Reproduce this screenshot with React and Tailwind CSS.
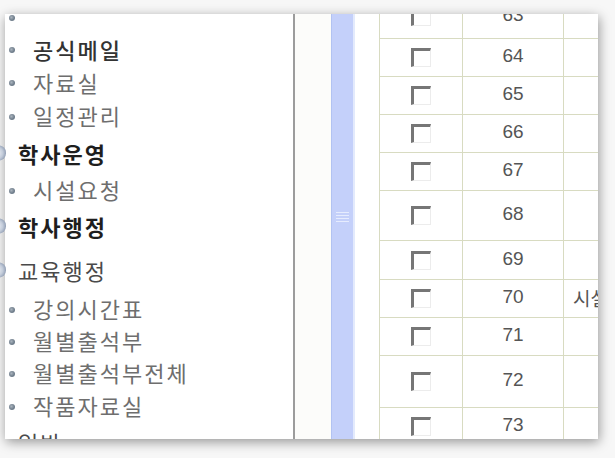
const MENU = [
  { type: 'dot', label: '', h: 32 },
  { type: 'sub', label: '공식메일', h: 33, strong: true },
  { type: 'sub', label: '자료실', h: 33 },
  { type: 'sub', label: '일정관리', h: 34 },
  { type: 'cat', label: '학사운영', h: 42, bold: true },
  { type: 'sub', label: '시설요청', h: 30 },
  { type: 'cat', label: '학사행정', h: 44, bold: true },
  { type: 'cat', label: '교육행정', h: 44 },
  { type: 'sub', label: '강의시간표', h: 32 },
  { type: 'sub', label: '월별출석부', h: 32 },
  { type: 'sub', label: '월별출석부전체', h: 32 },
  { type: 'sub', label: '작품자료실', h: 34 },
  { type: 'cat', label: '일반', h: 40, noIcon: true },
]

const ROWS = [
  { no: 63, h: 44 },
  { no: 64, h: 38 },
  { no: 65, h: 38 },
  { no: 66, h: 38 },
  { no: 67, h: 38 },
  { no: 68, h: 50 },
  { no: 69, h: 39 },
  { no: 70, h: 38, title: '시설' },
  { no: 71, h: 38 },
  { no: 72, h: 52 },
  { no: 73, h: 38 },
]

function Bullet() {
  return (
    <span className="ml-[4px] mt-[3px] h-[6px] w-[6px] shrink-0 rounded-full bg-[radial-gradient(circle_at_40%_40%,#aab4be_0%,#6d7b89_60%,#8e9aa6_100%)]" />
  )
}

function MenuItem({ item }) {
  if (item.type === 'dot') {
    return (
      <div className="flex items-end pb-[11px]" style={{ height: item.h }}>
        <Bullet />
      </div>
    )
  }
  if (item.type === 'cat') {
    return (
      <div className="relative flex items-center" style={{ height: item.h }}>
        {!item.noIcon && (
          <span className="absolute left-[-13px] top-1/2 h-[15px] w-[14px] -translate-y-1/2 rounded-full bg-[radial-gradient(circle_at_35%_50%,#f2f4f8_0%,#c3ccda_50%,#6a7a96_100%)]" />
        )}
        <span
          className={`pl-[13px] text-[22px] leading-none tracking-[2px] ${
            item.bold ? 'font-bold text-[#1e1e1e]' : 'text-[#4a4a4a]'
          }`}
        >
          {item.label}
        </span>
      </div>
    )
  }
  return (
    <div className="flex items-center" style={{ height: item.h }}>
      <Bullet />
      <span
        className={`ml-[18px] text-[22px] leading-none tracking-[2px] ${
          item.strong ? 'font-medium text-[#333]' : 'text-[#6e6e6e]'
        }`}
      >
        {item.label}
      </span>
    </div>
  )
}

function CheckBox() {
  return (
    <span className="block h-[19px] w-[20px] border-t-[3px] border-l-[3px] border-r border-b border-t-[#767676] border-l-[#767676] border-r-[#ececec] border-b-[#ececec] bg-white" />
  )
}

export default function App() {
  return (
    <div className="h-[458px] w-[615px] overflow-hidden bg-[#f7f7f7] pt-[14px] pl-[5px] font-['Noto_Sans_CJK_KR',sans-serif]">
      <div className="flex h-[425px] w-[593px] bg-white shadow-[1px_3px_11px_rgba(0,0,0,0.4)]">
        {/* left menu tree */}
        <div className="w-[290px] shrink-0 overflow-y-clip overflow-x-visible border-r-2 border-r-[#9c9c9c]">
          <div className="-mt-[14px]">
            {MENU.map((item, i) => (
              <MenuItem key={i} item={item} />
            ))}
          </div>
        </div>

        {/* splitter */}
        <div className="w-[36px] shrink-0 bg-[#fcfcfa]" />
        <div className="flex w-[24px] shrink-0 items-center justify-center border-l border-r-2 border-l-[#b2c3f2] border-r-[#e3eafc] bg-[#c4d0fa]">
          <div className="-mt-[20px] flex flex-col gap-[2px]">
            <span className="block h-px w-[13px] bg-[#e6ecfe]" />
            <span className="block h-px w-[13px] bg-[#e6ecfe]" />
            <span className="block h-px w-[13px] bg-[#e6ecfe]" />
            <span className="block h-px w-[13px] bg-[#e6ecfe]" />
          </div>
        </div>
        <div className="w-[24px] shrink-0 bg-white" />

        {/* list table */}
        <div className="flex-1 overflow-hidden">
          <div className="-mt-[19px] w-[340px] border-l border-[#d8dbc1]">
            {ROWS.map((row) => (
              <div key={row.no} className="flex border-b border-[#d8dbc1]" style={{ height: row.h }}>
                <div className="flex w-[83px] shrink-0 items-center justify-center border-r border-[#d8dbc1]">
                  <CheckBox />
                </div>
                <div className="flex w-[101px] shrink-0 items-center justify-center border-r border-[#d8dbc1] pb-[4px] font-['Liberation_Sans',Arial,sans-serif] text-[19px] leading-none text-[#555]">
                  {row.no}
                </div>
                <div className="flex flex-1 items-center pl-[9px] pb-[2px] text-[19px] leading-none text-[#555]">
                  {row.title}
                </div>
              </div>
            ))}
          </div>
        </div>
      </div>
    </div>
  )
}
